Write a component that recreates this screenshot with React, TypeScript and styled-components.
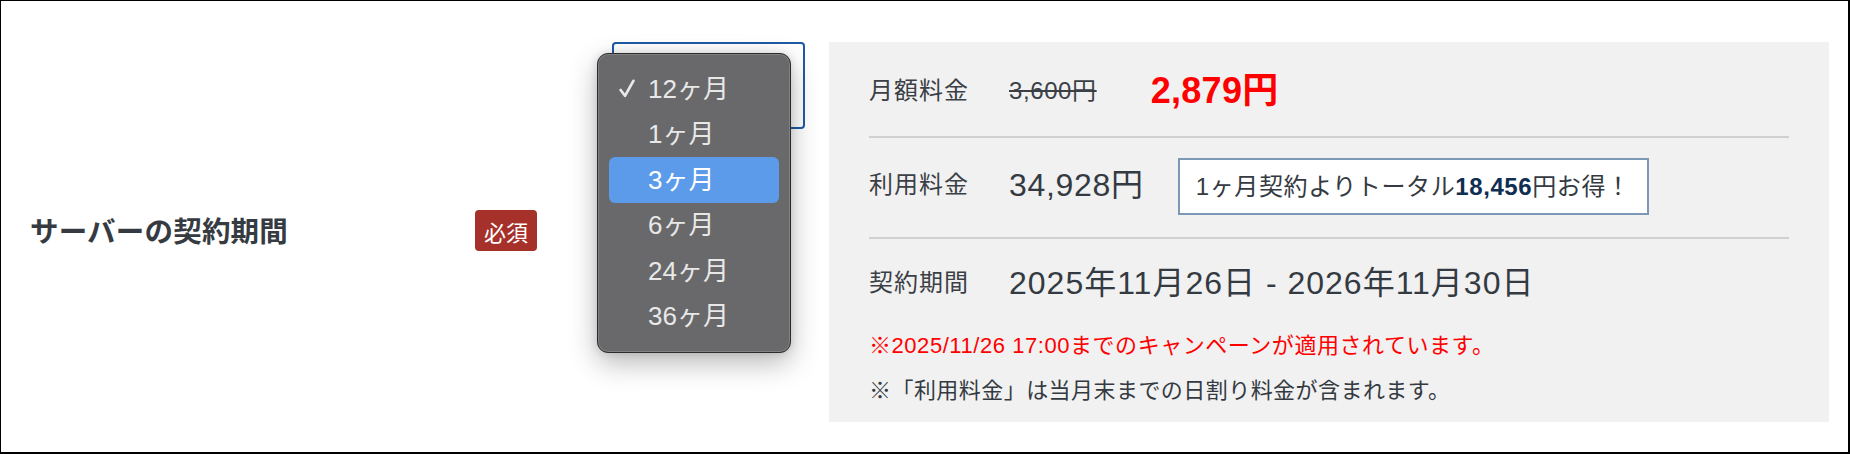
import React from "react";
import styled, { createGlobalStyle } from "styled-components";

const GlobalStyle = createGlobalStyle`
  html, body { margin: 0; padding: 0; background: #fff; }
  body { font-family: "Liberation Sans", "Noto Sans CJK JP", sans-serif; }
  * { box-sizing: border-box; }
`;

const Frame = styled.div`
  width: 1850px;
  height: 454px;
  border-style: solid;
  border-color: #000;
  border-width: 1px 2px 2px 1px;
  display: flex;
  align-items: flex-start;
  padding: 41px 0 0 29px;
  background: #fff;
`;

const LabelCell = styled.div`
  width: 507px;
  height: 380px;
  margin-right: 75px;
  display: flex;
  align-items: center;
  justify-content: space-between;
`;

const Title = styled.div`
  font-size: 28.5px;
  font-weight: 700;
  color: #363b42;
  line-height: 1;
  letter-spacing: 0.2px;
`;

const Badge = styled.span`
  width: 62px;
  height: 41px;
  border-radius: 4px;
  background: #a6302a;
  color: #fff;
  font-size: 22px;
  display: flex;
  align-items: center;
  justify-content: center;
  margin-top: -3px;
`;

const SelectWrap = styled.div`
  position: relative;
  width: 193px;
  height: 87px;
  margin-right: 24px;
`;

const SelectBox = styled.div`
  width: 100%;
  height: 100%;
  border: 2px solid #1e5ba3;
  border-radius: 4px;
  background: #fff;
`;

const Menu = styled.ul`
  position: absolute;
  left: -15px;
  top: 11px;
  width: 194px;
  margin: 0;
  list-style: none;
  padding: 12px 11px 13px;
  background: #69696b;
  border: 1px solid #2c2c2c;
  border-radius: 11px;
  box-shadow: inset 0 0 0 1px rgba(255, 255, 255, 0.16),
    0 10px 28px rgba(0, 0, 0, 0.28), 0 0 8px rgba(0, 0, 0, 0.12);
  z-index: 2;
`;

const MenuItem = styled.li<{ $active?: boolean }>`
  height: 45.5px;
  display: flex;
  align-items: center;
  padding-left: 10px;
  border-radius: 6px;
  font-size: 26px;
  line-height: 1;
  color: ${(p) => (p.$active ? "#ffffff" : "#e8e8e8")};
  background: ${(p) => (p.$active ? "#5b9be9" : "transparent")};
`;

const CheckSlot = styled.span`
  width: 29px;
  display: flex;
  align-items: center;
`;

const Panel = styled.div`
  width: 1000px;
  height: 380px;
  background: #f1f1f1;
  padding: 0 40px 7px;
  display: flex;
  flex-direction: column;
`;

const Row = styled.div<{ $pt: number; $pb: number; $divider?: boolean; $lift?: number }>`
  display: flex;
  align-items: center;
  padding-top: ${(p) => p.$pt}px;
  padding-bottom: ${(p) => p.$pb}px;
  border-bottom: ${(p) => (p.$divider ? "2px solid #d0d0d0" : "none")};
  & > span {
    margin-bottom: ${(p) => p.$lift ?? 0}px;
  }
`;

const Line = styled.div<{ $h: number }>`
  display: flex;
  align-items: center;
  height: ${(p) => p.$h}px;
`;

const Label = styled.span`
  width: 140px;
  font-size: 24px;
  line-height: 1;
  letter-spacing: 1px;
  color: #3b3f46;
  flex-shrink: 0;
`;

const Strike = styled.span`
  font-size: 24px;
  line-height: 1;
  letter-spacing: 0.6px;
  color: #3b3f46;
  text-decoration: line-through;
  margin-right: 54px;
`;

const Sale = styled.span`
  font-size: 36px;
  line-height: 1;
  font-weight: 700;
  letter-spacing: 0.3px;
  color: #ff0000;
`;

const Value = styled.span<{ $mr?: number; $ls?: number }>`
  font-size: 32px;
  line-height: 1;
  letter-spacing: ${(p) => p.$ls ?? 0}px;
  color: #343a42;
  margin-right: ${(p) => p.$mr ?? 0}px;
  white-space: nowrap;
`;

const SaveBox = styled.div`
  height: 57px;
  border: 2px solid #7d97b6;
  background: #fff;
  padding: 0 16px;
  display: flex;
  align-items: center;
  font-size: 24px;
  line-height: 1;
  letter-spacing: 0.6px;
  color: #343a42;
  white-space: nowrap;
`;

const SaveAmount = styled.b`
  color: #0f2e52;
  font-weight: 700;
`;

const Block = styled.div`
  padding-top: 24px;
`;

const Notes = styled.div`
  margin-top: 20px;
`;

const Note = styled.p<{ $red?: boolean }>`
  margin: 0;
  line-height: 45px;
  font-size: 22px;
  letter-spacing: ${(p) => (p.$red ? 0.55 : 0.45)}px;
  color: ${(p) => (p.$red ? "#ff0000" : "#343a42")};
  white-space: nowrap;
`;

const Check = () => (
  <svg width="16" height="19" viewBox="0 0 16 19" fill="none">
    <path
      d="M1.6 11 L6 16.8 L14.4 1.8"
      stroke="#e8e8e8"
      strokeWidth="2.7"
      strokeLinecap="round"
      strokeLinejoin="round"
    />
  </svg>
);

const options = ["12ヶ月", "1ヶ月", "3ヶ月", "6ヶ月", "24ヶ月", "36ヶ月"];

export default function App() {
  return (
    <>
      <GlobalStyle />
      <Frame>
        <LabelCell>
          <Title>サーバーの契約期間</Title>
          <Badge>必須</Badge>
        </LabelCell>
        <SelectWrap>
          <SelectBox aria-label="12ヶ月" />
          <Menu>
            {options.map((o, i) => (
              <MenuItem key={o} $active={i === 2}>
                <CheckSlot>{i === 0 ? <Check /> : null}</CheckSlot>
                {o}
              </MenuItem>
            ))}
          </Menu>
        </SelectWrap>
        <Panel>
          <Row $pt={25} $pb={21} $divider>
            <Line $h={48}>
              <Label>月額料金</Label>
              <Strike>3,600円</Strike>
              <Sale>2,879円</Sale>
            </Line>
          </Row>
          <Row $pt={20} $pb={22} $divider $lift={4}>
            <Label>利用料金</Label>
            <Value $mr={34} $ls={0.7}>34,928円</Value>
            <SaveBox>
              1ヶ月契約よりトータル<SaveAmount>18,456</SaveAmount>円お得！
            </SaveBox>
          </Row>
          <Block>
            <Line $h={40}>
              <Label>契約期間</Label>
              <Value $ls={1}>2025年11月26日 - 2026年11月30日</Value>
            </Line>
            <Notes>
              <Note $red>※2025/11/26 17:00までのキャンペーンが適用されています。</Note>
              <Note>※「利用料金」は当月末までの日割り料金が含まれます。</Note>
            </Notes>
          </Block>
        </Panel>
      </Frame>
    </>
  );
}
